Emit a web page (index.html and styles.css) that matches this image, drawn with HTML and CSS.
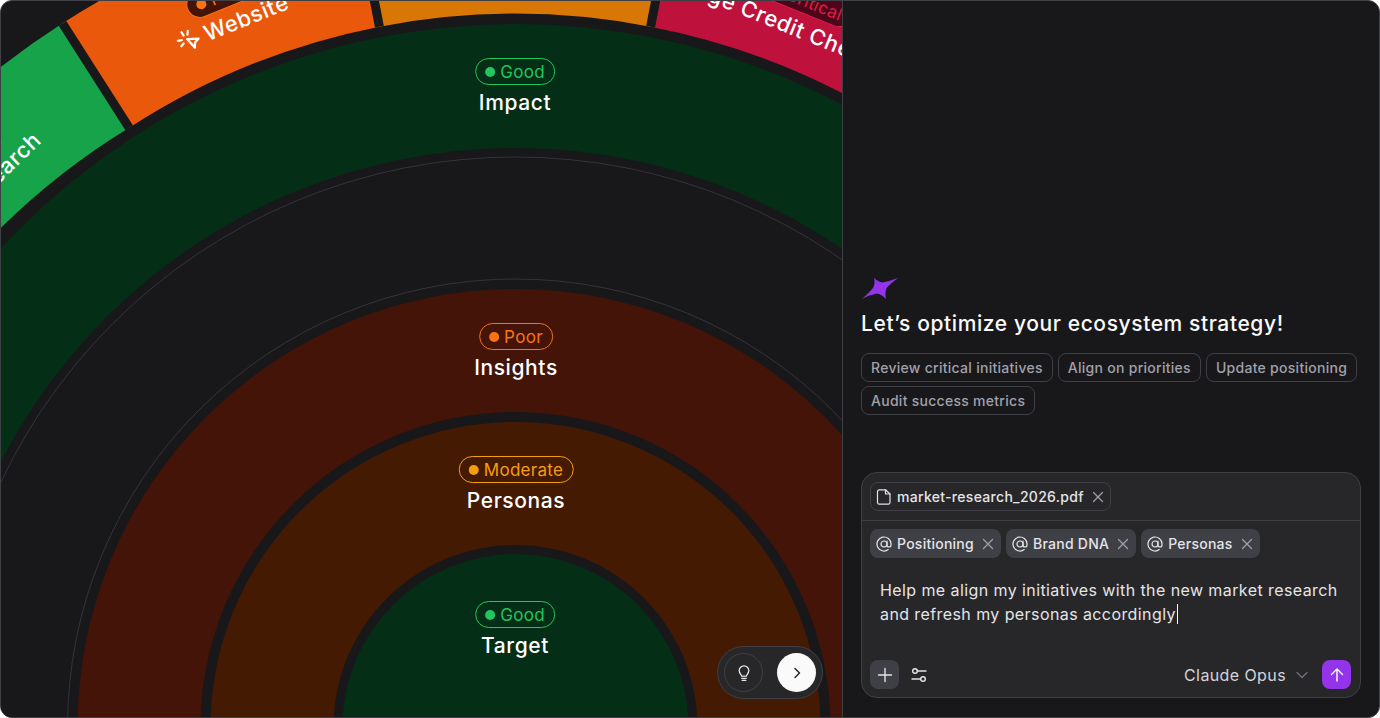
FILE: index.html
```html
<!DOCTYPE html>
<html lang="en">
<head>
<meta charset="utf-8">
<title>Ecosystem strategy</title>
<link rel="stylesheet" href="styles.css">
</head>
<body>
<div class="app">
  <main class="canvas">
    <svg class="rings" width="842" height="718" viewBox="0 0 842 718" aria-hidden="true">
      <circle class="fill-green" cx="515.5" cy="727" r="703"/>
      <circle class="ring-gap" cx="515.5" cy="727" r="579"/>
      <circle class="outline" cx="515.5" cy="727" r="570"/>
      <circle class="outline" cx="515.5" cy="727" r="448"/>
      <circle class="fill-red" cx="515.5" cy="727" r="438"/>
      <circle class="ring-gap" cx="515.5" cy="727" r="315"/>
      <circle class="fill-amber" cx="515.5" cy="727" r="305"/>
      <circle class="ring-gap" cx="515.5" cy="727" r="182"/>
      <circle class="fill-green" cx="515.5" cy="727" r="173"/>
      <!-- outer sectors: r 713 to 837 -->
      <path class="seg-green" d="M 62.500 23.300 A 837 837 0 0 0 -86.600 145.600 L -2.600 231.300 A 713 713 0 0 1 129.200 127.800 Z"/>
      <path class="seg-orange" d="M 62.500 23.300 A 837 837 0 0 1 355.800 -94.600 L 379.400 26.700 A 713 713 0 0 0 129.200 127.800 Z"/>
      <path class="seg-amber" d="M 355.800 -94.600 A 837 837 0 0 1 674.200 -94.600 L 650.600 26.700 A 713 713 0 0 0 379.400 26.700 Z"/>
      <path class="seg-rose" d="M 674.200 -94.600 A 837 837 0 0 1 971.100 25.800 L 903.800 129 A 713 713 0 0 0 650.600 26.700 Z"/>
      <g class="spokes">
        <line x1="62.500" y1="23.300" x2="129.200" y2="127.800"/>
        <line x1="355.800" y1="-94.600" x2="379.400" y2="26.700"/>
        <line x1="674.200" y1="-94.600" x2="650.600" y2="26.700"/>
      </g>
    </svg>

    <div class="sector sector-research">
      <span class="pill pill-solid-green"><i class="dot dot-good"></i>Good</span>
      <span class="sector-name">
        <svg class="sector-icon" viewBox="0 0 16 16"><circle cx="7" cy="7" r="4.500"/><path d="M10.500 10.500 14 14"/></svg>
        Research
      </span>
    </div>
    <div class="sector sector-website">
      <span class="pill pill-solid-orange"><i class="dot dot-poor"></i>Poor</span>
      <span class="sector-name">
        <svg class="sector-icon" viewBox="0 0 16 16"><path d="M7.200 6.600 14.400 9.200 11.200 10.700 9.800 14Z"/><path d="M5.400 1 5.900 3.600M1 5.400 3.600 5.900M9.600 1.800 8.500 3.900M1.800 9.600 3.900 8.500"/></svg>
        Website
      </span>
    </div>
    <div class="sector sector-credit">
      <span class="pill pill-solid-rose"><i class="dot dot-crit"></i>Critical</span>
      <span class="sector-name">Age Credit Check</span>
    </div>

    <div class="label label-impact">
      <span class="pill pill-good"><i class="dot dot-good"></i>Good</span>
      <span class="label-name">Impact</span>
    </div>
    <div class="label label-insights">
      <span class="pill pill-poor"><i class="dot dot-poor"></i>Poor</span>
      <span class="label-name">Insights</span>
    </div>
    <div class="label label-personas">
      <span class="pill pill-moderate"><i class="dot dot-moderate"></i>Moderate</span>
      <span class="label-name">Personas</span>
    </div>
    <div class="label label-target">
      <span class="pill pill-good"><i class="dot dot-good"></i>Good</span>
      <span class="label-name">Target</span>
    </div>

    <div class="control">
      <button class="control-hint" type="button">
        <svg viewBox="0 0 16 20" width="16" height="20"><path d="M5.600 13.200c0-1.500-2.400-2.600-2.400-5.600a4.800 4.800 0 0 1 9.600 0c0 3-2.400 4.100-2.400 5.600Z"/><path d="M5.800 15.400h4.400M6.200 17.400h3.600"/></svg>
      </button>
      <button class="control-next" type="button">
        <svg viewBox="0 0 16 16" width="16" height="16"><path d="M6 3.500 10.500 8 6 12.500"/></svg>
      </button>
    </div>
  </main>

  <aside class="panel">
    <section class="intro">
      <svg class="spark" viewBox="0 0 38 24" width="38" height="24"><path d="M13 .7Q17 5 21.500 5.500Q29 4 37 1Q30 6 26 10.500Q23.500 15 25 22Q21 17.500 16 16.500Q8 18 1 22Q8 16 12 11Q14.500 6 13 .7Z"/></svg>
      <h1 class="headline">Let’s optimize your ecosystem strategy!</h1>
      <div class="suggestions">
        <button class="suggestion" type="button">Review critical initiatives</button>
        <button class="suggestion" type="button">Align on priorities</button>
        <button class="suggestion" type="button">Update positioning</button>
        <button class="suggestion" type="button">Audit success metrics</button>
      </div>
    </section>

    <form class="composer">
      <div class="attachments">
        <span class="file-chip">
          <svg class="chip-icon" viewBox="0 0 16 16"><path d="M9.500 .8H3.300A1.800 1.800 0 0 0 1.500 2.600v10.800a1.800 1.800 0 0 0 1.800 1.800h8.900a1.800 1.800 0 0 0 1.800-1.800V5Z"/><path d="M9.500 .8V5H14"/></svg>
          market-research_2026.pdf
          <svg class="chip-x" viewBox="0 0 12 12"><path d="M1.500 1.500l9 9M10.500 1.500l-9 9"/></svg>
        </span>
      </div>
      <div class="mentions">
        <span class="mention">
          <svg class="chip-icon" viewBox="0 0 16 16"><circle cx="8" cy="8" r="3"/><path d="M11 5v4a2 2 0 0 0 4 0V8A7 7 0 1 0 12.200 13.600"/></svg>
          Positioning
          <svg class="chip-x" viewBox="0 0 12 12"><path d="M1.500 1.500l9 9M10.500 1.500l-9 9"/></svg>
        </span>
        <span class="mention">
          <svg class="chip-icon" viewBox="0 0 16 16"><circle cx="8" cy="8" r="3"/><path d="M11 5v4a2 2 0 0 0 4 0V8A7 7 0 1 0 12.200 13.600"/></svg>
          Brand DNA
          <svg class="chip-x" viewBox="0 0 12 12"><path d="M1.500 1.500l9 9M10.500 1.500l-9 9"/></svg>
        </span>
        <span class="mention">
          <svg class="chip-icon" viewBox="0 0 16 16"><circle cx="8" cy="8" r="3"/><path d="M11 5v4a2 2 0 0 0 4 0V8A7 7 0 1 0 12.200 13.600"/></svg>
          Personas
          <svg class="chip-x" viewBox="0 0 12 12"><path d="M1.500 1.500l9 9M10.500 1.500l-9 9"/></svg>
        </span>
      </div>
      <p class="prompt">Help me align my initiatives with the new market research and refresh my personas accordingly<span class="caret"></span></p>
      <div class="composer-bar">
        <button class="tool tool-add" type="button">
          <svg viewBox="0 0 16 16" width="16" height="16"><path d="M8 1.500v13M1.500 8h13"/></svg>
        </button>
        <button class="tool" type="button">
          <svg viewBox="0 0 16 16" width="16" height="16"><circle cx="4" cy="4" r="2.300"/><path d="M6.300 4H15M1 12h8.700"/><circle cx="12" cy="12" r="2.300"/></svg>
        </button>
        <span class="model">Claude Opus
          <svg viewBox="0 0 12 12" width="12" height="12"><path d="M1 3.500 6 8.500 11 3.500"/></svg>
        </span>
        <button class="send" type="button">
          <svg viewBox="0 0 16 16" width="16" height="16"><path d="M8 14V2M2.500 7.500 8 2l5.500 5.500"/></svg>
        </button>
      </div>
    </form>
  </aside>
</div>
</body>
</html>
```
FILE: styles.css
```css
* { box-sizing: border-box; }
html, body { margin: 0; height: 100%; background: #fff; }
body { font-family: "Inter", "Liberation Sans", sans-serif; overflow: hidden; }
button { font: inherit; border: 0; padding: 0; background: none; color: inherit; }
svg { display: block; }

.app {
  display: flex;
  width: 1380px;
  height: 718px;
  background: #18181b;
  border: 1px solid #3f3f46;
  border-radius: 12px;
  overflow: hidden;
}

/* Diagram canvas */
.canvas { position: relative; width: 841px; flex: none; overflow: hidden; }
.rings { position: absolute; left: -1px; top: -1px; }
.outline { fill: none; stroke: #33333a; stroke-width: 1; }
.ring-gap { fill: #18181b; }
.fill-green { fill: #052e16; }
.fill-red { fill: #431407; }
.fill-amber { fill: #451a03; }
.seg-green { fill: #16a34a; }
.seg-orange { fill: #ea580c; }
.seg-amber { fill: #d97706; }
.seg-rose { fill: #be123c; }
.spokes line { stroke: #18181b; stroke-width: 9; }

.label {
  position: absolute;
  transform: translateX(-50%);
  display: flex;
  flex-direction: column;
  align-items: center;
  gap: 5px;
}
.label-impact { left: 514px; top: 57px; }
.label-insights { left: 515px; top: 322px; }
.label-personas { left: 515px; top: 455px; }
.label-target { left: 514px; top: 600px; }
.label-name {
  font-size: 21px;
  line-height: 26px;
  font-weight: 500;
  color: #fff;
  letter-spacing: .6px;
}

.pill {
  display: inline-flex;
  align-items: center;
  gap: 5px;
  height: 27px;
  padding: 1px 9px 0;
  border: 1px solid;
  border-radius: 14px;
  font-size: 17px;
  line-height: 20px;
  letter-spacing: .3px;
}
.dot { width: 10px; height: 10px; border-radius: 50%; flex: none; }
.dot-good { background: #22c55e; }
.dot-poor { background: #f97316; }
.dot-moderate { background: #f59e0b; }
.dot-crit { background: #e11d48; }
.pill-good { color: #22c55e; border-color: #22c55e; }
.pill-poor { color: #f97316; border-color: #f97316; }
.pill-moderate { color: #f59e0b; border-color: #f59e0b; }

.sector {
  position: absolute;
  display: flex;
  flex-direction: column;
  align-items: center;
  gap: 3px;
  width: 240px;
  margin-left: -120px;
}
.sector-name {
  display: flex;
  align-items: center;
  gap: 5px;
  font-size: 22px;
  line-height: 26px;
  font-weight: 500;
  color: #fff;
  letter-spacing: .6px;
  white-space: nowrap;
}
.sector-icon { width: 24px; height: 24px; fill: none; stroke: #fff; stroke-width: 1.500; stroke-linecap: round; stroke-linejoin: round; }
.sector-research { left: -22px; top: 142px; transform: rotate(-44deg); }
.sector-website { left: 226px; top: -20px; transform: rotate(-22deg); }
.sector-credit { left: 790px; top: -19px; transform: rotate(22deg); }
.sector-credit .pill { margin-left: 24px; }
.pill-solid-green { background: #052e16; color: #22c55e; border-color: #22c55e; }
.pill-solid-orange { background: #431407; color: #f97316; border-color: #f97316; }
.pill-solid-rose { background: #4c0519; color: #e11d48; border-color: #e11d48; }

.control {
  position: absolute;
  left: 716px;
  top: 645px;
  display: flex;
  align-items: center;
  justify-content: space-between;
  width: 106px;
  height: 53px;
  padding: 0 6px;
  background: #27272a;
  border: 1px solid #3f3f46;
  border-radius: 27px;
}
.control-hint {
  display: flex; align-items: center; justify-content: center;
  width: 39px; height: 39px;
  border: 1px solid #3f3f46; border-radius: 50%;
}
.control-hint svg { fill: none; stroke: #e4e4e7; stroke-width: 1.300; stroke-linecap: round; stroke-linejoin: round; }
.control-next {
  display: flex; align-items: center; justify-content: center;
  width: 39px; height: 39px;
  background: #fafafa; border-radius: 50%;
}
.control-next svg { fill: none; stroke: #27272a; stroke-width: 1.500; stroke-linecap: round; stroke-linejoin: round; }

/* Assistant panel */
.panel {
  flex: 1;
  display: flex;
  flex-direction: column;
  justify-content: flex-end;
  border-left: 1px solid #3f3f46;
  padding: 0 18px 19px;
}
.intro { margin-bottom: 57px; }
.spark { fill: #9333ea; }
.headline {
  margin: 9px 0 15px;
  font-size: 21px;
  line-height: 28px;
  font-weight: 500;
  color: #fafafa;
  letter-spacing: .6px;
}
.suggestions { display: flex; flex-wrap: wrap; gap: 4px 5px; }
.suggestion {
  height: 29px;
  padding: 0 9px;
  border: 1px solid #3f3f46;
  border-radius: 8px;
  font-size: 14px;
  font-weight: 500;
  letter-spacing: .28px;
  color: #a1a1aa;
}

.composer {
  background: #27272a;
  border: 1px solid #3f3f46;
  border-radius: 16px;
  height: 226px;
  display: flex;
  flex-direction: column;
}
.attachments {
  display: flex;
  padding: 9px 8px;
  border-bottom: 1px solid #3f3f46;
  height: 48px;
}
.file-chip {
  display: inline-flex; align-items: center; gap: 5px;
  height: 29px; padding: 0 6px 0 5px;
  border: 1px solid #3f3f46; border-radius: 8px;
  font-size: 14px; font-weight: 500; letter-spacing: .3px; color: #e4e4e7;
}
.mentions { display: flex; gap: 5px; padding: 8px 8px 0; }
.mention {
  display: inline-flex; align-items: center; gap: 5px;
  height: 29px; padding: 0 7px 0 6px;
  background: #3f3f46; border-radius: 8px;
  font-size: 14px; font-weight: 500; letter-spacing: .25px; color: #e4e4e7;
}
.chip-icon { width: 16px; height: 16px; fill: none; stroke: #e4e4e7; stroke-width: 1.200; stroke-linecap: round; stroke-linejoin: round; }
.chip-x { width: 12px; height: 12px; margin-left: 3px; fill: none; stroke: #a1a1aa; stroke-width: 1.200; stroke-linecap: round; }
.prompt {
  margin: 20px 18px 0;
  font-size: 16px;
  line-height: 24px;
  color: #e4e4e7;
  letter-spacing: .41px;
}
.caret { display: inline-block; width: 1px; height: 20px; background: #fafafa; vertical-align: -4px; margin-left: 1px; }
.composer-bar {
  display: flex; align-items: center; gap: 5px;
  margin-top: auto;
  padding: 0 9px 8px 8px;
}
.tool {
  display: flex; align-items: center; justify-content: center;
  width: 29px; height: 29px; border-radius: 8px;
}
.tool svg { fill: none; stroke: #e4e4e7; stroke-width: 1.400; stroke-linecap: round; }
.tool-add { background: #3f3f46; }
.model {
  margin-left: auto;
  display: flex; align-items: center; gap: 10px;
  font-size: 16px; letter-spacing: .4px; color: #d4d4d8; margin-right: 9px;
}
.model svg { fill: none; stroke: #71717a; stroke-width: 1.300; stroke-linecap: round; stroke-linejoin: round; }
.send {
  display: flex; align-items: center; justify-content: center;
  width: 29px; height: 29px; border-radius: 8px; background: #9333ea;
}
.send svg { fill: none; stroke: #fff; stroke-width: 1.400; stroke-linecap: round; stroke-linejoin: round; }
```
